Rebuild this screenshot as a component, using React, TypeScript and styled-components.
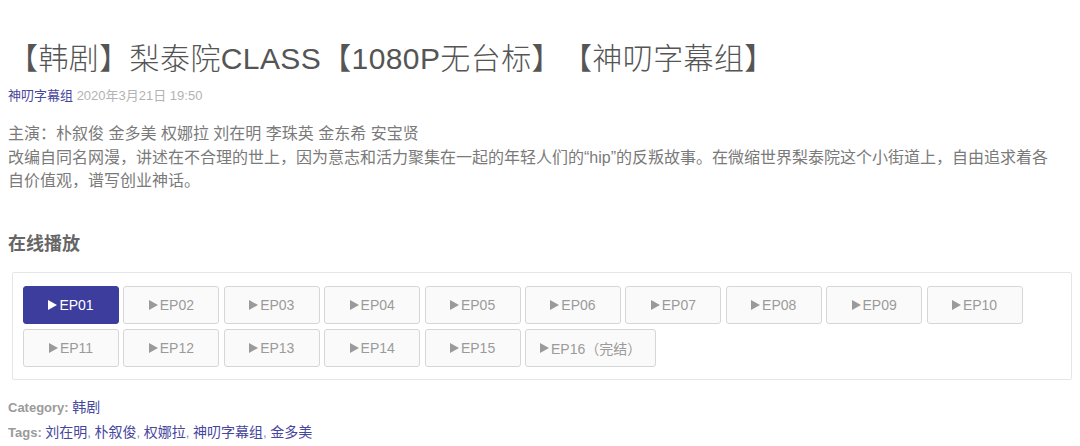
import styled, { createGlobalStyle } from "styled-components";

const GlobalStyle = createGlobalStyle`
  body {
    margin: 8px;
    background: #ffffff;
    font-family: "Liberation Sans", "Noto Sans CJK SC", sans-serif;
    color: #7a7a7a;
    text-spacing-trim: space-all;
  }
`;

const episodes = [
  "EP01", "EP02", "EP03", "EP04", "EP05", "EP06", "EP07", "EP08",
  "EP09", "EP10", "EP11", "EP12", "EP13", "EP14", "EP15", "EP16（完结）",
];

const cast = "主演：朴叙俊 金多美 权娜拉 刘在明 李珠英 金东希 安宝贤";
const summary =
  "改编自同名网漫，讲述在不合理的世上，因为意志和活力聚集在一起的年轻人们的“hip”的反叛故事。在微缩世界梨泰院这个小街道上，自由追求着各自价值观，谱写创业神话。";

const tags = ["刘在明", "朴叙俊", "权娜拉", "神叨字幕组", "金多美"];

function PlayIcon() {
  return (
    <Triangle width="9" height="10" viewBox="0 0 9 10" aria-hidden="true">
      <path d="M0 0 L9 5 L0 10 Z" fill="currentColor" />
    </Triangle>
  );
}

function App() {
  return (
    <>
      <GlobalStyle />
      <Article>
        <Title>【韩剧】梨泰院CLASS【1080P无台标】【神叨字幕组】</Title>
        <Meta>
          <Link href="#">神叨字幕组</Link> <DateText>2020年3月21日 19:50</DateText>
        </Meta>
        <Body>
          <p>{cast}</p>
          <p>{summary}</p>
        </Body>
        <SectionTitle>在线播放</SectionTitle>
        <PlayBox>
          {episodes.map((ep, i) => (
            <EpisodeButton key={ep} $active={i === 0}>
              <PlayIcon />
              {ep}
            </EpisodeButton>
          ))}
        </PlayBox>
        <Footer>
          <FooterLine>
            <Label>Category:</Label> <FooterLink href="#">韩剧</FooterLink>
          </FooterLine>
          <FooterLine>
            <Label>Tags:</Label>{" "}
            {tags.map((t, i) => (
              <span key={t}>
                <FooterLink href="#">{t}</FooterLink>
                {i < tags.length - 1 && <Sep>, </Sep>}
              </span>
            ))}
          </FooterLine>
        </Footer>
      </Article>
    </>
  );
}

export default App;

const Article = styled.article`
  display: flex;
  flex-direction: column;
`;

const Title = styled.h1`
  margin: 31px 0 0;
  font-size: 30px;
  line-height: 40px;
  font-weight: 300;
  color: #555555;
  letter-spacing: 0.4px;
`;

const Meta = styled.div`
  margin-top: 7px;
  font-size: 13px;
  line-height: 20px;
`;

const Link = styled.a`
  color: #46469c;
  text-decoration: none;
`;

const FooterLink = styled(Link)`
  font-size: 14px;
`;

const DateText = styled.span`
  color: #b3b3b3;
`;

const Body = styled.div`
  margin-top: 16px;
  padding-right: 14px;
  font-size: 16px;
  line-height: 23.5px;
  color: #7a7a7a;

  p {
    margin: 0;
  }
`;

const SectionTitle = styled.h3`
  margin: 39px 0 0;
  font-size: 18px;
  line-height: 24px;
  font-weight: bold;
  color: #666666;
`;

const PlayBox = styled.div`
  margin: 16px 0 0 4px;
  border: 1px solid #e6e6e6;
  border-radius: 2px;
  padding: 13px 10px 12px;
  display: flex;
  flex-wrap: wrap;
  gap: 5px 4.4px;
`;

const EpisodeButton = styled.button<{ $active: boolean }>`
  box-sizing: border-box;
  min-width: 96px;
  height: 38px;
  padding: 0 14px;
  border-radius: 3px;
  border: 1px solid ${(p) => (p.$active ? "#3d3d9e" : "#d6d6d6")};
  background: ${(p) => (p.$active ? "#3d3d9e" : "#fafafa")};
  color: ${(p) => (p.$active ? "#ffffff" : "#9a9a9a")};
  font-family: "Liberation Sans", "Noto Sans CJK SC", sans-serif;
  font-size: 14px;
  display: flex;
  align-items: center;
  justify-content: center;
  gap: 2px;
  cursor: pointer;
`;

const Triangle = styled.svg`
  display: block;
  flex: none;
`;

const Footer = styled.div`
  margin-top: 15px;
  font-size: 13px;
  line-height: 24px;
`;

const FooterLine = styled.div``;

const Label = styled.span`
  font-weight: bold;
  color: #9a9a9a;
`;

const Sep = styled.span`
  color: #8a8ab0;
`;
